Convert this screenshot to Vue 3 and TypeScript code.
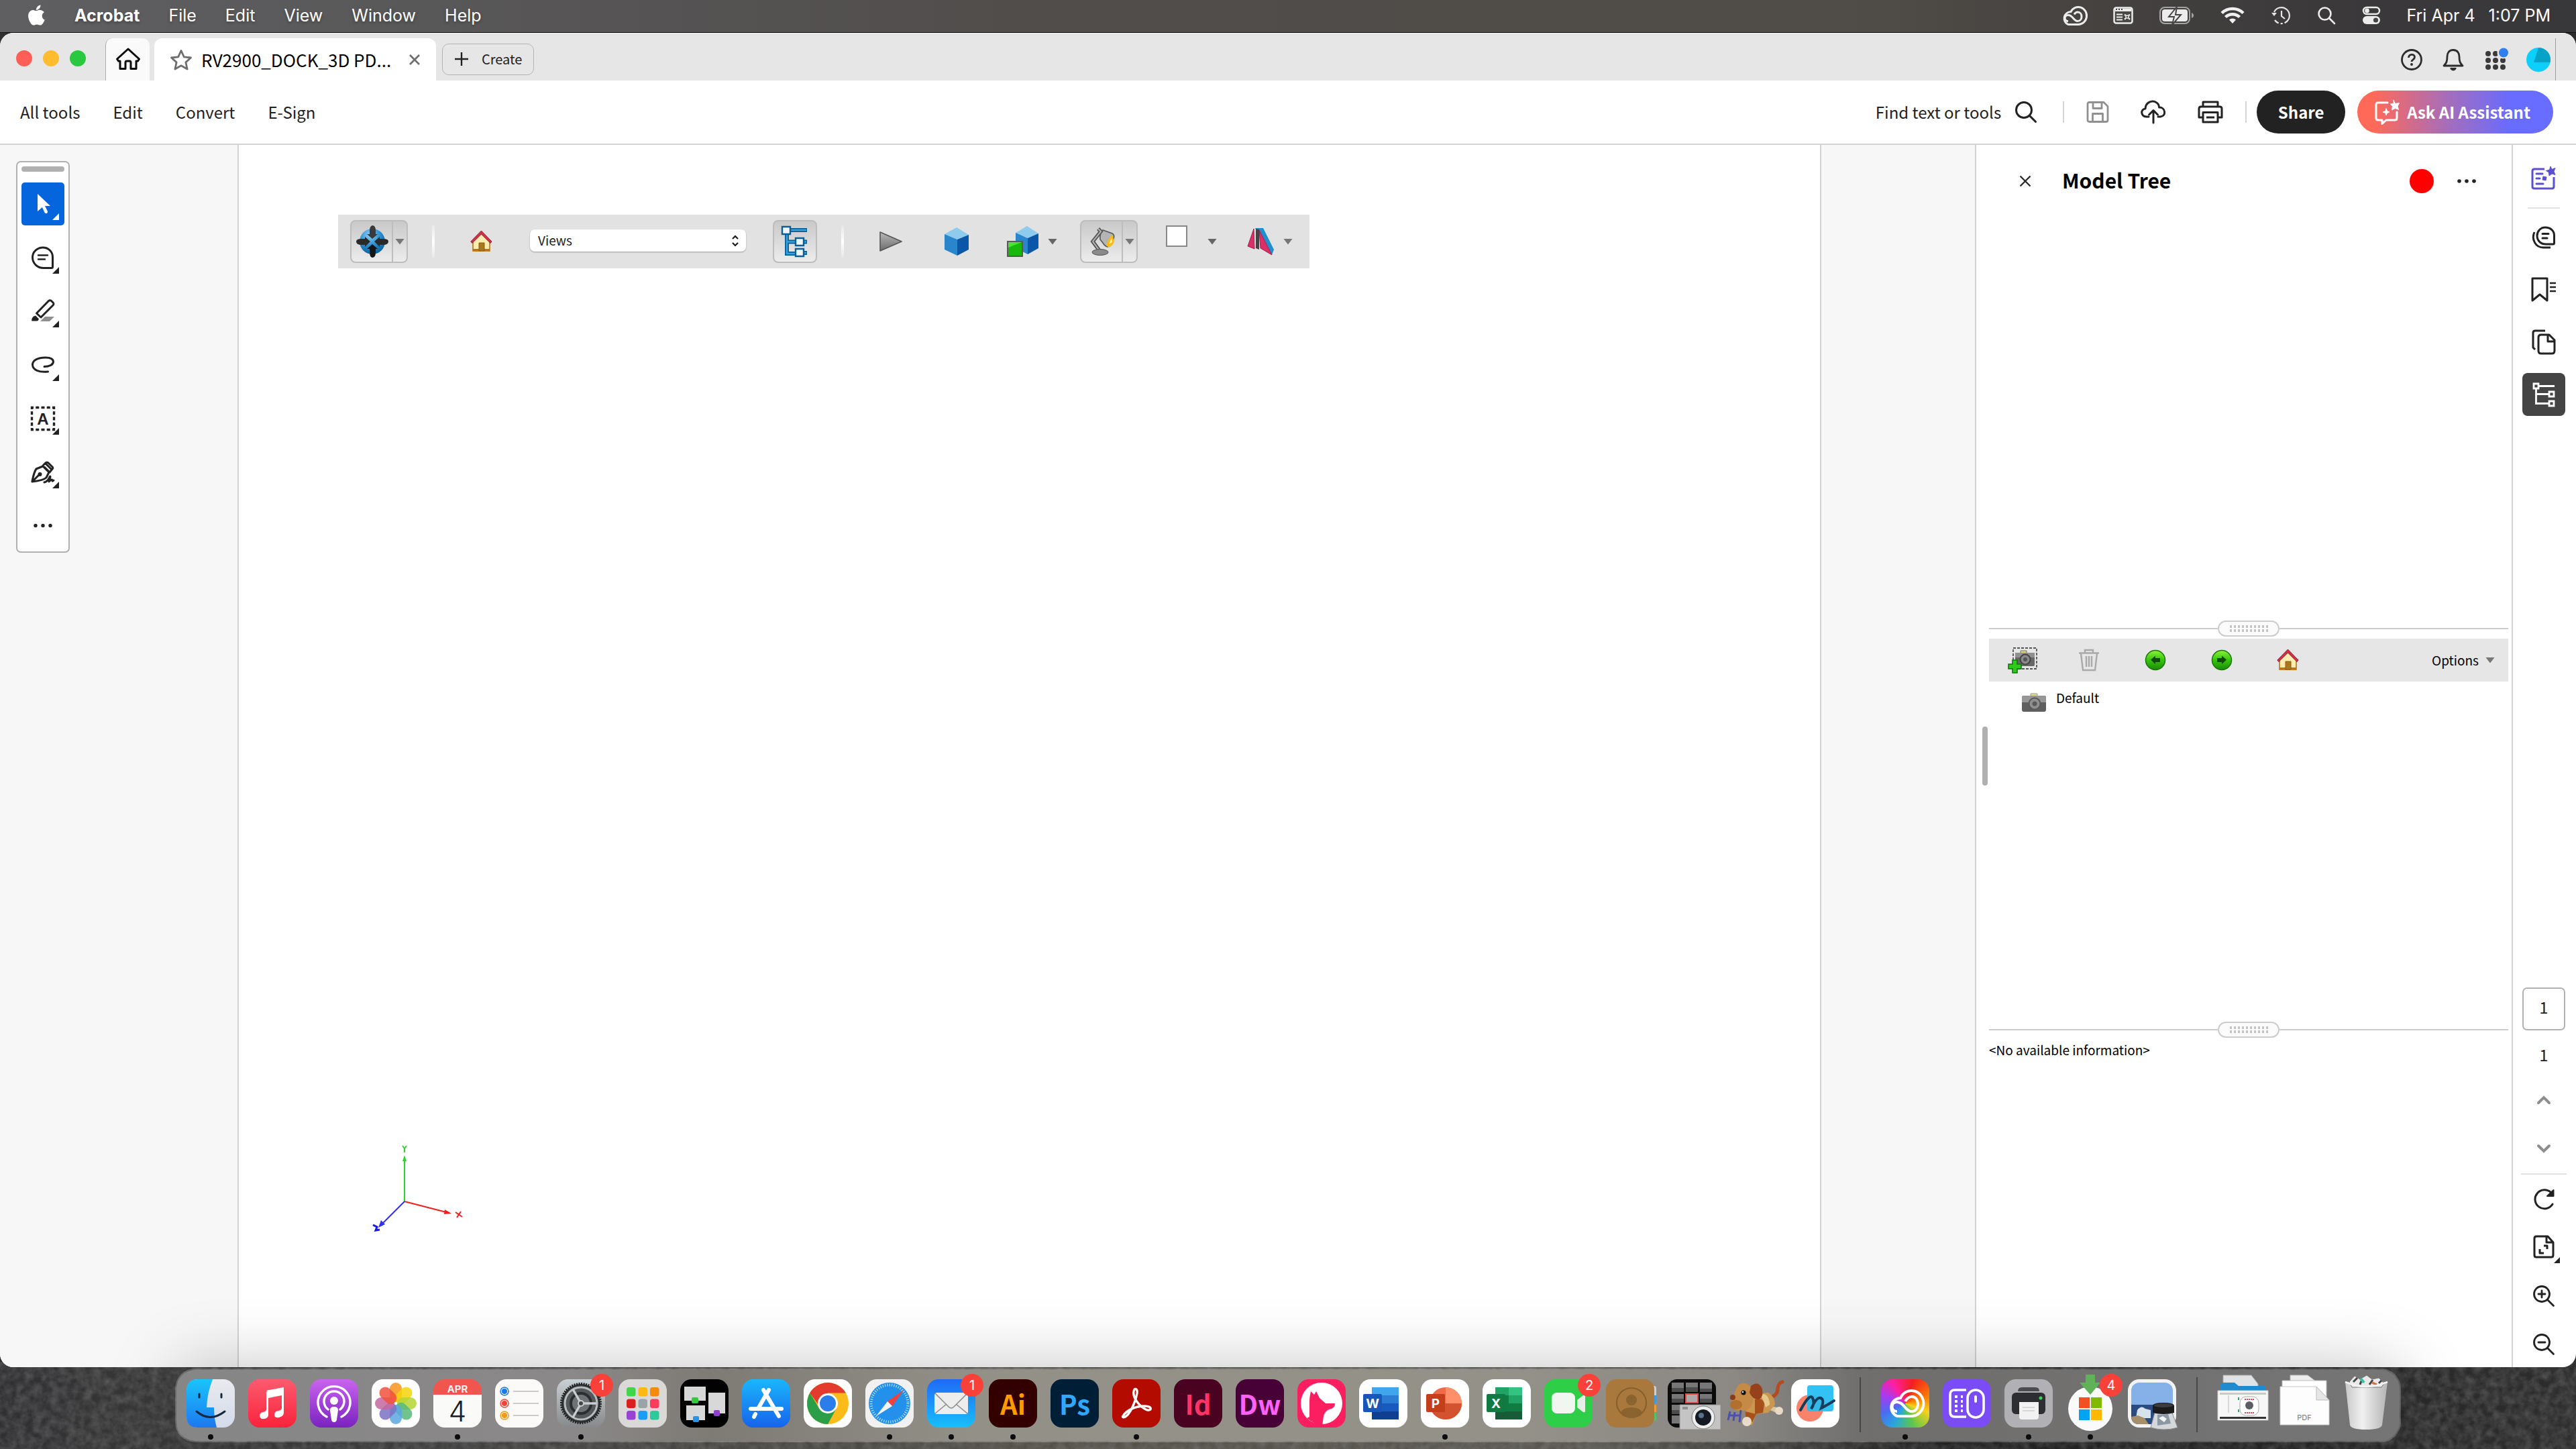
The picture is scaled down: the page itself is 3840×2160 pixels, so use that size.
<script setup lang="ts">
import { ref } from 'vue'

const menus = ['File', 'Edit', 'View', 'Window', 'Help']
const tools = ['All tools', 'Edit', 'Convert', 'E-Sign']
const page = ref('1')
const view = ref('Views')
const petals = [
  { a: 0, c: '#f7941d' },
  { a: 45, c: '#f5d50a' },
  { a: 90, c: '#b5d334' },
  { a: 135, c: '#57b97a' },
  { a: 180, c: '#5aa7e0' },
  { a: 225, c: '#7b72c4' },
  { a: 270, c: '#c667a0' },
  { a: 315, c: '#f2513c' },
]
const pads = ['#3fd649', '#fdb813', '#f58a0b', '#d9201c', '#9aa3a8', '#fb3b5c', '#9a42d6', '#1a9df4', '#2cc99b']
const gripCols = [0, 1, 2, 3, 4, 5, 6, 7, 8, 9]
</script>

<template>
  <div class="desktop">
    <svg class="stone" aria-hidden="true">
      <filter id="grain" x="0" y="0" width="100%" height="100%">
        <feTurbulence type="fractalNoise" baseFrequency="0.08" numOctaves="4" seed="4" />
        <feColorMatrix values="0 0 0 0 0.5  0 0 0 0 0.5  0 0 0 0 0.5  0.9 0.5 0 0 -0.45" />
      </filter>
      <rect width="100%" height="100%" filter="url(#grain)" />
    </svg>

    <header class="menubar">
      <nav class="menus" aria-label="Application menu">
        <svg class="apple" width="28" height="32" viewBox="0 0 28 32" fill="#fff"><path d="M20.400 0.500c.2 2-.6 3.900-1.800 5.300-1.200 1.300-3 2.300-4.700 2.200-.2-1.900.7-3.900 1.800-5.100C17 1.500 18.900.600 20.400.500zM26 11.200c-2.100 1.300-3.300 3.100-3.300 5.500 0 2.700 1.500 4.900 4 5.900-.5 1.600-1.300 3-2.200 4.300-1.300 1.900-2.600 3.700-4.600 3.700-2 0-2.600-1.200-4.900-1.200-2.300 0-3 1.200-4.900 1.200-2 .1-3.500-2-4.800-3.900C2.600 22.800.7 16 3.300 11.600c1.300-2.200 3.500-3.600 5.900-3.700 2 0 3.800 1.300 4.900 1.300s3.300-1.600 5.700-1.300c2.500.1 4.700 1.200 6.200 3.300z" /></svg>
        <button class="menu strong" type="button">Acrobat</button>
        <button v-for="m in menus" :key="m" class="menu" type="button">{{ m }}</button>
      </nav>
      <div class="status">
        <svg width="40" height="32" viewBox="0 0 40 32" fill="none" stroke="#ececec" stroke-width="3"><path d="M12 29.500h15a12.500 13 0 1 0-11-19A10.500 10 0 0 0 12 29.500z" /><path d="M12 24.500c-6 0-7-9 0-9 7 0 8 9 14 9 8 0 8-13.500 0-13.500-3 0-4 2-5 3.500" /></svg>
        <svg width="30" height="26" viewBox="0 0 30 26"><rect x="1.500" y="1.500" width="27" height="23" rx="3" fill="#4a4746" stroke="#ececec" stroke-width="2.500" /><path d="M3 3h24v4H3z" fill="#ececec" /><path d="M4 4h2M8 4h2M12 4h2" stroke="#444" stroke-width="2" /><path d="M5 11.500h9M5 15.500h9M5 19.500h9" stroke="#ececec" stroke-width="2.200" /><path d="M19 13h4v4h-4zM17.500 13.500V12H19M23 12h1.500v1.500M24.500 17v1.500H23M19 18.500h-1.500V17" stroke="#ececec" stroke-width="1.600" fill="none" /></svg>
        <svg width="52" height="28" viewBox="0 0 52 28"><rect x="1" y="2" width="44" height="24" rx="7" fill="none" stroke="#a5a3a3" stroke-width="2" /><rect x="4" y="5" width="38" height="18" rx="4" fill="#ececec" /><path d="M26 1 14 16h8l-3 12 13-15h-8z" fill="#ececec" stroke="#474445" stroke-width="2" /><path d="M48 10v8c2-1 3-2 3-4s-1-3-3-4z" fill="#a5a3a3" /></svg>
        <svg width="36" height="28" viewBox="0 0 36 28" fill="none" stroke="#f0f0f0" stroke-width="4.500"><path d="M2 10.500a23 23 0 0 1 32 0M7.500 16.500a15 15 0 0 1 21 0" /><path d="m18 26-5-5.500a7.500 7.500 0 0 1 10 0z" fill="#f0f0f0" stroke="none" /></svg>
        <svg width="30" height="28" viewBox="0 0 30 28" fill="none" stroke="#e6e6e6" stroke-width="2.200"><path d="M5 9A12 12 0 1 1 6 21" stroke-dasharray="46 3 3 3" /><path d="M16 7v8l5 4" /><path d="m1 10 4 5 4-5z" fill="#e6e6e6" stroke="none" /></svg>
        <svg width="28" height="28" viewBox="0 0 28 28" fill="none" stroke="#ececec" stroke-width="2.600"><circle cx="11.500" cy="11.500" r="9" /><path d="m18 18 8 8" stroke-linecap="round" /></svg>
        <svg width="28" height="28" viewBox="0 0 28 28"><rect x="2" y="2" width="24" height="10" rx="5" fill="none" stroke="#ececec" stroke-width="2.400" /><circle cx="7.500" cy="7" r="3.400" fill="#ececec" /><rect x="1" y="15" width="26" height="12" rx="6" fill="#ececec" /><circle cx="20.500" cy="21" r="3.600" fill="#444" /></svg>
        <time class="clock"><span>Fri Apr 4</span><span>1:07 PM</span></time>
      </div>
    </header>

    <main class="window">
      <div class="titlebar">
        <div class="lights"><i class="red"></i><i class="amber"></i><i class="green"></i></div>
        <button class="home-tab" type="button" aria-label="Home">
          <svg width="38" height="34" viewBox="0 0 38 34" fill="none" stroke="#0a0a0a" stroke-width="3" stroke-linejoin="round"><path d="M19 2 2.500 17l2 3H7v11.500h8V22q0-2 2-2h4q2 0 2 2v9.500h8V20h2.500l2-3z" /></svg>
        </button>
        <div class="doc-tab">
          <svg width="34" height="32" viewBox="0 0 34 32" fill="none" stroke="#6e6e6e" stroke-width="2.800" stroke-linejoin="round"><path d="m17 2.500 4.300 9.400 10.200 1.100-7.600 6.900 2.200 10.100L17 24.800 7.900 30l2.200-10.100L2.500 13l10.200-1.100z" /></svg>
          <span class="doc-name">RV2900_DOCK_3D PD...</span>
          <button class="bare" type="button" aria-label="Close tab"><svg width="18" height="18" viewBox="0 0 18 18" stroke="#6e6e6e" stroke-width="2.800"><path d="m2 2 14 14M16 2 2 16" /></svg></button>
        </div>
        <button class="create" type="button"><svg width="20" height="20" viewBox="0 0 20 20" stroke="#222" stroke-width="2.400"><path d="M10 0v20M0 10h20" /></svg>Create</button>
        <div class="account">
          <svg width="34" height="34" viewBox="0 0 34 34" fill="none" stroke="#2c2c2c" stroke-width="2.800"><circle cx="17" cy="17" r="14.500" /><path d="M12.500 14c0-6 9-6 9-1 0 4-4.500 3.500-4.500 7" /><circle cx="17" cy="24" r="1.200" fill="#2c2c2c" stroke-width="1.500" /></svg>
          <svg width="34" height="34" viewBox="0 0 34 34" fill="none" stroke="#2c2c2c" stroke-width="2.800" stroke-linejoin="round"><path d="M17 2.500c-6.500 0-9 5-9 10 0 8-1.500 9.500-5 13.500h28c-3.500-4-5-5.500-5-13.500 0-5-2.500-10-9-10z" /><path d="M13.500 29c1 4 6 4 7 0" fill="#2c2c2c" /></svg>
          <svg width="36" height="34" viewBox="0 0 36 34" fill="#3a3a3a"><circle cx="7" cy="8" r="4" /><circle cx="18" cy="8" r="4" /><circle cx="7" cy="18" r="4" /><circle cx="18" cy="18" r="4" /><circle cx="29" cy="18" r="4" /><circle cx="7" cy="28" r="4" /><circle cx="18" cy="28" r="4" /><circle cx="29" cy="28" r="4" /><circle cx="29" cy="7" r="8.500" fill="#e6e6e6" /><circle cx="30" cy="6.500" r="7" fill="#2f80ed" /></svg>
          <svg width="36" height="36" viewBox="0 0 36 36"><circle cx="18" cy="18" r="18" fill="#0cd0fb" /><path d="M18 0a18 18 0 0 1 17.500 22H11z" fill="#06a2c8" /></svg>
        </div>
      </div>

      <div class="toolbar">
        <nav class="tool-tabs" aria-label="Tools"><button v-for="t in tools" :key="t" class="bare" type="button">{{ t }}</button></nav>
        <div class="actions">
          <button class="bare find" type="button">Find text or tools
            <svg width="34" height="34" viewBox="0 0 34 34" fill="none" stroke="#222" stroke-width="3" stroke-linecap="round"><circle cx="14" cy="14" r="11.500" /><path d="m22.500 22.500 9 9" /></svg>
          </button>
          <i class="rule"></i>
          <div class="trio">
            <button class="bare" type="button" aria-label="Save"><svg width="34" height="32" viewBox="0 0 34 32" fill="none" stroke="#909090" stroke-width="2.800" stroke-linejoin="round"><path d="M2 4q0-2.500 2.500-2.500H26l6 6V28q0 2.500-2.500 2.500h-25Q2 30.500 2 28z" /><path d="M10 2v8.500h13V2M9.500 30V18.500h15V30" /></svg></button>
            <button class="bare" type="button" aria-label="Save to cloud"><svg width="38" height="36" viewBox="0 0 38 36" fill="none" stroke="#222" stroke-width="3" stroke-linecap="round" stroke-linejoin="round"><path d="M12 25H8.500C0 24.500-.5 14 7 13 7 4 17-.5 23 3.500c3.500 2 4.500 5 4.500 7.500 10 0 11 13 2 14H26" /><path d="M19 34V16M12.500 22l6.500-6.500 6.500 6.500" /></svg></button>
            <button class="bare" type="button" aria-label="Print"><svg width="38" height="34" viewBox="0 0 38 34" fill="none" stroke="#222" stroke-width="3" stroke-linejoin="round"><path d="M8 8.500V2h22v6.500M8 25H2V12q0-3 3-3h28q3 0 3 3v13h-6" /><path d="M8 17.500h22V32H8zM13 25h12" /></svg></button>
          </div>
          <i class="rule"></i>
          <button class="share" type="button">Share</button>
          <button class="ask" type="button">
            <svg width="38" height="38" viewBox="0 0 38 38" fill="none" stroke="#fff" stroke-width="3" stroke-linejoin="round" stroke-linecap="round"><path d="M19 5H5Q2 5 2 8v20q0 3 3 3h6v5.500L17 31h13q3 0 3-3V19" /><path d="m28 1.500 2.500 5 6-1-2.500 5 1.500 5-5-2-5 2.500 1-5.500L23 7l5-.5z" fill="#fff" stroke-width="1" /><path d="m17 14 1.500 3.500L22 19l-3.500 1.500L17 24l-1-3.500-4-1.500 4-1.500z" fill="#fff" stroke-width="1" /></svg>
            Ask AI Assistant
          </button>
        </div>
      </div>

      <div class="body">
        <aside class="gutter-left">
          <div class="palette">
            <i class="handle"></i>
            <button class="tool on" type="button" aria-label="Select"><svg width="64" height="64" viewBox="0 0 64 64"><path d="M24 17v26l7-6 3.500 8q1 1.500 3 1t1.500-3L35 35h8z" fill="#fff" /><path d="M56 46v10H46z" fill="#fff" /></svg></button>
            <button class="tool" type="button" aria-label="Comment"><svg width="64" height="64" viewBox="0 0 64 64" fill="none" stroke="#222" stroke-width="3"><path d="M32 17c-9 0-15.500 7-15.500 14.500C16.500 41 24 47.500 33 47.500h12q1.500 0 1.500-1.500V31C46.500 23 40 17 32 17z" /><path d="M25 28.500h14M25 34.500h10" stroke-width="2.400" stroke-linecap="round" /><path d="M56 46v10H46z" fill="#222" stroke="none" /></svg></button>
            <button class="tool" type="button" aria-label="Highlight"><svg width="64" height="64" viewBox="0 0 64 64" fill="none" stroke="#222" stroke-width="3" stroke-linejoin="round"><path d="m40.500 16.500q2-1.500 4 0l3 3q1 1.500 0 3L29 41l-6.500-6z" /><path d="M15 46q0-6 6-7.500l5 5q-1 3-3 3h-7z" fill="#222" stroke="none" /><path d="M35 40h14l-7 7H28z" fill="#909090" stroke="none" /><path d="M56 46v10H46z" fill="#222" stroke="none" /></svg></button>
            <button class="tool" type="button" aria-label="Draw"><svg width="64" height="64" viewBox="0 0 64 64" fill="none" stroke="#222" stroke-width="3" stroke-linecap="round"><path d="M34 34.500c8 0 13-3 13.500-7 0-5-6-6.500-12-6.500-11 0-19 4-19 10.500 0 8 10 12 23 10.500" /><path d="M56 46v10H46z" fill="#222" stroke="none" /></svg></button>
            <button class="tool" type="button" aria-label="Select text"><svg width="64" height="64" viewBox="0 0 64 64"><rect x="15.500" y="15.500" width="33" height="33" fill="none" stroke="#222" stroke-width="3.400" stroke-dasharray="5 3.250" stroke-dashoffset="2.500" /><text x="32" y="40.500" text-anchor="middle" class="glyph-a">A</text><path d="M56 46v10H46z" fill="#222" /></svg></button>
            <button class="tool" type="button" aria-label="Sign"><svg width="64" height="64" viewBox="0 0 64 64" fill="none" stroke="#222" stroke-width="3" stroke-linejoin="round" stroke-linecap="round"><path d="M16 45q3-14 6-18l10-4 9 9-4 8q-4 4-21 6zM17 45l10-10M32 22l4-4q2-1.500 4 0l6 6q1.500 2 0 3l-4 5zM37 20l7 7" /><circle cx="27.500" cy="35" r="2" fill="#222" stroke-width="2" /><path d="M34 47q5-1 8-8 1-2 1 0l-2 7q3-3 4-3t1 1.500 2-.5" /><path d="M56 46v10H46z" fill="#222" stroke="none" /></svg></button>
            <button class="tool" type="button" aria-label="More tools"><svg width="64" height="64" viewBox="0 0 64 64" fill="#222"><circle cx="21" cy="31.500" r="2.700" /><circle cx="32" cy="31.500" r="2.700" /><circle cx="43" cy="31.500" r="2.700" /></svg></button>
          </div>
        </aside>

        <section class="page">
          <div class="bar3d">
            <div class="cell">
              <div class="split">
                <button class="face" type="button" aria-label="Rotate"><svg width="54" height="54" viewBox="0 0 54 54"><defs><radialGradient id="ball" cx=".4" cy=".25" r=".8"><stop offset="0" stop-color="#8fd0f4" /><stop offset=".5" stop-color="#2b8fd0" /><stop offset="1" stop-color="#0a5a96" /></radialGradient></defs><circle cx="28" cy="27" r="19" fill="url(#ball)" /><path d="M24 16v-5q0-7 4-8 5 0 5 8v5h3l-8 7-8-7z" fill="#3a3a3a" /><path d="M24 38v5q0 7 4 8 5 0 5-8v-5h3l-8-7-8 7z" fill="#151515" /><path d="M17 23h-5q-8 0-8 4 0 5 8 5h5v3l8-8-8-7z" fill="#2a2a2a" /><path d="M39 23h5q8 0 8 4 0 5-8 5h-5v3l-8-8 8-7z" fill="#2a2a2a" /></svg></button>
                <button class="drop" type="button" aria-label="Rotate options"><i class="tri"></i></button>
              </div>
            </div>
            <div class="cell"><i class="sep"></i></div>
            <div class="cell"><button class="bare" type="button" aria-label="Default view"><svg width="34" height="34" viewBox="0 0 34 34"><path d="M4 16v15h25V16L16.500 5z" fill="#ffedb0" stroke="#b5761c" stroke-width="1.600" /><path d="M4 28h25v3.500H4z" fill="#c07515" /><path d="M13 31V19h8v12z" fill="#a8791a" stroke="#8a5c10" /><path d="M16.500 1 .8 17l2 2.500L16.500 6 30 19.500l2-2.500z" fill="#d2304a" stroke="#8e1a2c" /></svg></button></div>
            <div class="cell"><label class="views"><select v-model="view" aria-label="Views"><option>Views</option></select><svg width="12" height="18" viewBox="0 0 12 18" fill="none" stroke="#1a1a1a" stroke-width="2.200"><path d="m2 6 4-4 4 4M2 12l4 4 4-4" /></svg></label></div>
            <div class="cell">
              <button class="face solo" type="button" aria-label="Toggle model tree"><svg width="44" height="48" viewBox="0 0 44 48"><path d="M14 7h26M10 14v28h14M10 24.500h30M24 41h16" fill="none" stroke="#0a5f94" stroke-width="6" /><path d="M14 7h25M10 14v28h14M10 24.500h29M24 41h15" fill="none" stroke="#3aa0d8" stroke-width="2.500" /><path d="M3 2h12v11H3zM23 19h12v11H23zM23 35h12v11H23z" fill="#eef6fc" stroke="#0a5f94" stroke-width="2.400" /></svg></button>
            </div>
            <div class="cell"><i class="sep"></i></div>
            <div class="cell"><button class="bare" type="button" aria-label="Play animation"><svg width="36" height="32" viewBox="0 0 36 32"><defs><linearGradient id="ply" x2="0" y2="1"><stop offset="0" stop-color="#b9b9b9" /><stop offset="1" stop-color="#6c6c6c" /></linearGradient></defs><path d="M2 2v28l32-14z" fill="url(#ply)" stroke="#555" stroke-width="1.600" stroke-linejoin="round" /></svg></button></div>
            <div class="cell"><button class="bare" type="button" aria-label="Perspective"><svg width="40" height="44" viewBox="0 0 40 44"><path d="M20 1 38 12 21 19 2 11z" fill="#8fcbec" /><path d="m2 11 19 8v24L2 34z" fill="#2a86cc" /><path d="M38 12v22L21 43V19z" fill="#0a56a8" /></svg></button></div>
            <div class="cell"><button class="bare pair" type="button" aria-label="Render mode"><svg width="50" height="48" viewBox="0 0 50 48"><path d="m31 1 17 11-16 7-18-8z" fill="#8fcbec" /><path d="m14 11 18 8v24l-18-9z" fill="#2a86cc" /><path d="M48 12v22L32 43V19z" fill="#0a56a8" /><path d="M2 24h22v22H2z" fill="#18b80c" stroke="#5a5a5a" stroke-width="2" /><path d="M3 25h20l-20 8z" fill="#4fe03a" /></svg><i class="tri dark"></i></button></div>
            <div class="cell">
              <div class="split">
                <button class="face" type="button" aria-label="Lighting"><svg width="44" height="46" viewBox="0 0 44 46"><path d="m24 6 14 5q4 2 2 8l-3 4-6 8q-4-1-7-6l-4-5q-1-9 4-14z" fill="#b4b4b4" stroke="#555" stroke-width="1.600" /><path d="m38 13 3 9q-1 6-8 10l-4-3q2-9 9-16z" fill="#f6b916" /><path d="m37 18 1 6-5 3z" fill="#fff3a0" /><path d="M17 4 21 8 9 23l11 15" fill="none" stroke="#555" stroke-width="5.500" /><path d="M17 4 21 8 9 23l11 15" fill="none" stroke="#b5b5b5" stroke-width="2" /><ellipse cx="20" cy="39" rx="12" ry="4.500" fill="#8a8a8a" stroke="#555" /></svg></button>
                <button class="drop" type="button" aria-label="Lighting options"><i class="tri"></i></button>
              </div>
            </div>
            <div class="cell"><button class="bare swatch" type="button" aria-label="Background colour"><i class="chip"></i><i class="tri dark"></i></button></div>
            <div class="cell"><button class="bare pair" type="button" aria-label="Cross section"><svg width="42" height="44" viewBox="0 0 42 44"><path d="M12 2 24 2 40 34 37 42z" fill="#1f90cf" /><path d="M10 3 1 29l10 4z" fill="#d8316a" stroke="#a51f4d" /><path d="M13 3v29l5 2V4z" fill="#444" /><path d="m18 5 2 27 17 10z" fill="#dc2f68" stroke="#a51f4d" /></svg><i class="tri"></i></button></div>
          </div>
          <svg class="axes" width="140" height="136" viewBox="0 0 140 136" fill="none" stroke-width="2">
            <path d="M51 87V22" stroke="#2fd42f" /><path d="m51 18-3 9h6z" fill="#2fd42f" /><path d="m48 4 3 4 3-4M51 8v6" stroke="#2fd42f" />
            <path d="m51 87 66 17" stroke="#f02020" /><path d="m121 105-10-6-1 7z" fill="#f02020" /><path d="m127 103 10 7M129 111l6-9" stroke="#f02020" />
            <path d="m51 87-34 34" stroke="#3030f0" /><path d="m12 126 4-11 6 6z" fill="#3030f0" /><path d="m4 122 6 3-2 5 6-1" stroke="#1a1ae0" stroke-width="3" />
          </svg>
        </section>
        <div class="gutter-right"></div>

        <aside class="panel">
          <i class="resizer"></i>
          <section class="pane">
            <header class="panel-head">
              <button class="bare" type="button" aria-label="Close panel"><svg width="18" height="18" viewBox="0 0 18 18" stroke="#2c2c2c" stroke-width="2.400"><path d="m1.500 1.500 15 15M16.500 1.500l-15 15" /></svg></button>
              <h2>Model Tree</h2>
              <i class="rec"></i>
              <button class="bare" type="button" aria-label="Panel options"><svg width="30" height="8" viewBox="0 0 30 8" fill="#222"><circle cx="4" cy="4" r="2.800" /><circle cx="15" cy="4" r="2.800" /><circle cx="26" cy="4" r="2.800" /></svg></button>
            </header>
          </section>
          <section class="pane">
            <div class="splitter"><span class="grip"><i v-for="g in gripCols" :key="g"></i></span></div>
            <div class="view-bar">
              <button class="bare slot" type="button" aria-label="Create view"><svg width="46" height="40" viewBox="0 0 46 40"><rect x="9" y="2" width="35" height="31" fill="none" stroke="#555" stroke-width="1.800" stroke-dasharray="4 2" /><path d="M20 6h9v5h-9z" fill="#ddd46a" stroke="#777" /><rect x="12" y="9" width="29" height="20" rx="2" fill="#686868" /><path d="M12 9h29v7H12z" fill="#909090" /><circle cx="27" cy="19" r="7.500" fill="#8a8a8a" stroke="#444" stroke-width="2" /><circle cx="27" cy="19" r="3" fill="#555" /><path d="M8 20h7v6h6v7h-6v6H8v-6H2v-7h6z" fill="#2fc81c" stroke="#0d7a08" stroke-width="1.600" /></svg></button>
              <button class="bare slot" type="button" aria-label="Delete view"><svg width="32" height="34" viewBox="0 0 32 34" fill="none" stroke="#a9a9a9" stroke-width="2.400"><path d="M1 6.500h30M10 6V2h12v4M4 7l3 25h18l3-25M12 11v16M16 11v16M20 11v16" /></svg></button>
              <button class="bare slot" type="button" aria-label="Previous view"><svg width="32" height="32" viewBox="0 0 32 32"><defs><linearGradient id="leaf" x2="0" y2="1"><stop offset="0" stop-color="#8cf03c" /><stop offset=".5" stop-color="#35c60a" /><stop offset="1" stop-color="#1c8a06" /></linearGradient></defs><circle cx="16" cy="16" r="14.500" fill="url(#leaf)" stroke="#1a7406" stroke-width="1.500" /><path d="m9 15.500 7-6v3.500h7v6h-7v3z" fill="#0e4a06" /></svg></button>
              <button class="bare slot" type="button" aria-label="Next view"><svg width="32" height="32" viewBox="0 0 32 32"><circle cx="16" cy="16" r="14.500" fill="url(#leaf)" stroke="#1a7406" stroke-width="1.500" /><path d="m23 15.500-7-6v3.500H9v6h7v3z" fill="#0e4a06" /></svg></button>
              <button class="bare slot" type="button" aria-label="Default view"><svg width="34" height="34" viewBox="0 0 34 34"><path d="M4 16v15h25V16L16.500 5z" fill="#ffedb0" stroke="#b5761c" stroke-width="1.600" /><path d="M4 28h25v3.500H4z" fill="#c07515" /><path d="M13 31V19h8v12z" fill="#a8791a" stroke="#8a5c10" /><path d="M16.500 1 .8 17l2 2.500L16.500 6 30 19.500l2-2.500z" fill="#d2304a" stroke="#8e1a2c" /></svg></button>
              <button class="bare options" type="button">Options<i class="tri"></i></button>
            </div>
            <div class="view-row">
              <svg width="38" height="30" viewBox="0 0 38 30"><path d="M14 1h10v6H14z" fill="#e3dc7a" stroke="#999" /><rect x="1" y="4" width="36" height="24" rx="3" fill="#5f5f5f" /><path d="M1 7q0-3 3-3h30q3 0 3 3v7H1z" fill="#979797" /><circle cx="20" cy="16" r="8.500" fill="#8f8f8f" stroke="#5a5a5a" stroke-width="2" /><circle cx="20" cy="16" r="3.500" fill="#5a5a5a" /></svg>
              <span>Default</span>
            </div>
          </section>
          <section class="pane">
            <div class="splitter"><span class="grip"><i v-for="g in gripCols" :key="g"></i></span></div>
            <p class="info">&lt;No available information&gt;</p>
          </section>
        </aside>

        <nav class="rail" aria-label="Panels">
          <div class="rail-top">
            <button class="bare rb" type="button" aria-label="AI Assistant"><svg width="38" height="36" viewBox="0 0 38 36" fill="none" stroke="#5c50d0" stroke-width="3" stroke-linejoin="round"><path d="M20 4H5Q2 4 2 7v23q0 3 3 3h26q3 0 3-3V16" /><path d="M8 11h9M8 18h5M8 26h10" stroke-linecap="round" /><path d="m29 0 2 4.500 5-2-2 5 2 5-5-1.500-4 3-.5-5-4-2.500 5-1.500zM18 15l5 1-1 5-5-1z" fill="#5c50d0" stroke-width="1" /></svg></button>
            <i class="rail-rule"></i>
            <button class="bare rb" type="button" aria-label="Comments"><svg width="36" height="34" viewBox="0 0 36 34" fill="none" stroke="#222" stroke-width="3" stroke-linejoin="round"><path d="M20 2C13 2 8 8 8 14.500 8 22 14 27 21 27h11q1.500 0 1.500-1.500V14C33.500 7 28 2 20 2z" /><path d="M16 11.500h9M16 18h7" stroke-linecap="round" /><path d="M4 9C-1 20 6 32 17 32h11" /></svg></button>
            <button class="bare rb" type="button" aria-label="Bookmarks"><svg width="38" height="38" viewBox="0 0 38 38" fill="none" stroke="#222" stroke-width="3" stroke-linejoin="round"><path d="M2 2h22v33l-11-9-11 9z" /><path d="M28 9h9M28 15h9M28 21h9" stroke-width="2.600" /></svg></button>
            <button class="bare rb" type="button" aria-label="Pages"><svg width="36" height="38" viewBox="0 0 36 38" fill="none" stroke="#222" stroke-width="3" stroke-linejoin="round"><path d="M20 2H5Q2 2 2 5v22l3 3" /><path d="M10 12q0-4 4-4h12l8 8v16q0 4-4 4H14q-4 0-4-4zM24 8v10h10" /></svg></button>
            <button class="bare rb on" type="button" aria-label="Model Tree"><svg width="36" height="38" viewBox="0 0 36 38" fill="none" stroke="#fff" stroke-width="2.800"><path d="M3 3h7v7H3zM26 15h7v7h-7zM26 29h7v7h-7zM11 6.500h23M6.500 11v21.500H25M7 18.500h18" /></svg></button>
          </div>
          <div class="rail-bottom">
            <input v-model="page" class="pagebox" aria-label="Page number" />
            <span class="total">1</span>
            <button class="bare rb" type="button" aria-label="Previous page"><svg width="24" height="14" viewBox="0 0 24 14" fill="none" stroke="#8e8e8e" stroke-width="4" stroke-linecap="round"><path d="m4 11 8-8 8 8" /></svg></button>
            <button class="bare rb" type="button" aria-label="Next page"><svg width="24" height="14" viewBox="0 0 24 14" fill="none" stroke="#8e8e8e" stroke-width="4" stroke-linecap="round"><path d="m4 3 8 8 8-8" /></svg></button>
            <i class="rail-rule wide"></i>
            <button class="bare rb" type="button" aria-label="Rotate page"><svg width="34" height="34" viewBox="0 0 34 34" fill="none" stroke="#222" stroke-width="3" stroke-linejoin="round"><path d="M30 24a14 14 0 1 1-2-17" stroke-linecap="round" /><path d="M31.500 3v9H22z" fill="#222" stroke-width="2" /></svg></button>
            <button class="bare rb" type="button" aria-label="Fit page"><svg width="64" height="64" viewBox="0 0 64 64" fill="none" stroke="#222" stroke-width="3" stroke-linejoin="round"><path d="M18 18q0-3 3-3h17l8 9v19q0 3-3 3H21q-3 0-3-3zM36 15v9h10" /><path d="M32 29h5v5M26 34v6h6" /><path d="M56 46v9h-9z" fill="#222" stroke="none" /></svg></button>
            <button class="bare rb" type="button" aria-label="Zoom in"><svg width="34" height="34" viewBox="0 0 34 34" fill="none" stroke="#222" stroke-width="2.800" stroke-linecap="round"><circle cx="14" cy="14" r="11.500" /><path d="m22.500 22.500 9 9M14 9v10M9 14h10" /></svg></button>
            <button class="bare rb" type="button" aria-label="Zoom out"><svg width="34" height="34" viewBox="0 0 34 34" fill="none" stroke="#222" stroke-width="2.800" stroke-linecap="round"><circle cx="14" cy="14" r="11.500" /><path d="m22.500 22.500 9 9M9 14h10" /></svg></button>
          </div>
        </nav>
      </div>
    </main>

    <footer class="dock-area">
      <div class="dock">
        <button class="app run" type="button" aria-label="Finder"><svg viewBox="0 0 72 72"><defs><linearGradient id="fb" x2="0" y2="1"><stop offset="0" stop-color="#19c4fb" /><stop offset="1" stop-color="#1e78f0" /></linearGradient><linearGradient id="fw" x2="0" y2="1"><stop offset="0" stop-color="#e9eaee" /><stop offset="1" stop-color="#d3dbea" /></linearGradient></defs><rect width="72" height="72" rx="17" fill="url(#fw)" /><path d="M17 0h22q-8 20-9 42h11q0 16 4 30H17Q0 72 0 55V17Q0 0 17 0z" fill="url(#fb)" /><path d="M19 22v5M52 22v5M15 48q20 17 42 0" fill="none" stroke="#14293f" stroke-width="3" stroke-linecap="round" /></svg></button>
        <button class="app" type="button" aria-label="Music"><svg viewBox="0 0 72 72"><defs><linearGradient id="mu" x2="0" y2="1"><stop offset="0" stop-color="#fb5b6f" /><stop offset="1" stop-color="#fa233b" /></linearGradient></defs><rect width="72" height="72" rx="17" fill="url(#mu)" /><path d="M26 17 53 12v38q0 5-7 7-7 1-7-4 0-5 6-6 5-1 5-4V24l-20 4v25q0 5-6 6t-7-4q0-5 5-6t5-4V20q0-2 2-3z" fill="#fff" /></svg></button>
        <button class="app" type="button" aria-label="Podcasts"><svg viewBox="0 0 72 72"><defs><linearGradient id="po" x2="0" y2="1"><stop offset="0" stop-color="#c964ef" /><stop offset="1" stop-color="#7a22c0" /></linearGradient></defs><rect width="72" height="72" rx="17" fill="url(#po)" /><g fill="none" stroke="#fff" stroke-width="3.400" stroke-linecap="round"><path d="M25 56a24 24 0 1 1 22 0M27 45a15 15 0 1 1 18 0" /></g><circle cx="36" cy="32" r="6" fill="#fff" /><path d="M30 46q0-5 6-5t6 5l-2 14q-.5 4-4 4t-4-4z" fill="#fff" /></svg></button>
        <button class="app" type="button" aria-label="Photos"><svg viewBox="0 0 72 72"><rect width="72" height="72" rx="17" fill="#fff" /><rect v-for="p in petals" :key="p.a" x="27" y="5" width="18" height="29" rx="9" :fill="p.c" opacity=".85" :transform="`rotate(${p.a} 36 36)`" /></svg></button>
        <button class="app cal run" type="button" aria-label="Calendar"><span class="month">APR</span><span class="day">4</span></button>
        <button class="app" type="button" aria-label="Reminders"><svg viewBox="0 0 72 72"><rect width="72" height="72" rx="17" fill="#fbfaf9" /><path d="M27 18h38M27 36h38M27 54h38" stroke="#bdbdbd" stroke-width="1.500" /><g fill="none" stroke-width="1.500"><circle cx="14" cy="18" r="6" stroke="#1677f0" /><circle cx="14" cy="36" r="6" stroke="#f04236" /><circle cx="14" cy="54" r="6" stroke="#f59a12" /></g><circle cx="14" cy="18" r="4" fill="#1677f0" /><circle cx="14" cy="36" r="4" fill="#f04236" /><circle cx="14" cy="54" r="4" fill="#f59a12" /></svg></button>
        <button class="app run" type="button" aria-label="System Settings"><svg viewBox="0 0 72 72"><defs><linearGradient id="se" x2="0" y2="1"><stop offset="0" stop-color="#c9d0d4" /><stop offset="1" stop-color="#86888b" /></linearGradient></defs><rect width="72" height="72" rx="17" fill="url(#se)" /><circle cx="36" cy="36" r="29" fill="#35383a" stroke="#222" stroke-width="4" stroke-dasharray="2 1.500" /><circle cx="36" cy="36" r="24" fill="#55585a" stroke="#b8bcbe" stroke-width="3" /><circle cx="36" cy="36" r="15" fill="#6f7274" stroke="#2b2d2e" stroke-width="4" /><path d="M36 36h23M36 36 24 15M36 36 24 57" stroke="#c9cdcf" stroke-width="3.500" /><circle cx="36" cy="36" r="4" fill="#444" stroke="#c9cdcf" stroke-width="2" /></svg><b class="badge">1</b></button>
        <button class="app" type="button" aria-label="Launchpad"><svg viewBox="0 0 72 72"><rect width="72" height="72" rx="17" fill="#dad9d8" /><rect v-for="(c, i) in pads" :key="i" :x="12 + (i % 3) * 17.5" :y="12 + Math.floor(i / 3) * 17.5" width="13.500" height="13.500" rx="3.500" :fill="c" /></svg></button>
        <button class="app" type="button" aria-label="Mission Control"><svg viewBox="0 0 72 72"><rect width="72" height="72" rx="17" fill="#020202" /><path d="M6 11h32v21H6zM42 20h25v31H42zM9 39h28v22H9z" fill="#d9d8d9" /><rect x="17" y="27" width="10" height="9" rx="2" fill="#36c93e" /><rect x="50" y="46" width="9" height="9" rx="2" fill="#9040cf" /><rect x="19" y="55" width="9" height="9" rx="2" fill="#2694e8" /></svg></button>
        <button class="app" type="button" aria-label="App Store"><svg viewBox="0 0 72 72"><defs><linearGradient id="as" x2="0" y2="1"><stop offset="0" stop-color="#1ab6fc" /><stop offset="1" stop-color="#1763ec" /></linearGradient></defs><rect width="72" height="72" rx="17" fill="url(#as)" /><path d="M40 16 24 44M32 16l23 39M13 44h46M20 52l-2 4" stroke="#fff" stroke-width="6" stroke-linecap="round" /></svg></button>
        <button class="app" type="button" aria-label="Chrome"><svg viewBox="0 0 72 72"><rect width="72" height="72" rx="17" fill="#fff" /><circle cx="36" cy="36" r="31" fill="#fbbc1a" /><path d="M9.200 20.500A31 31 0 0 1 62.800 20.500H36L25 42z" fill="#e33b2e" /><path d="M9.200 20.500A31 31 0 0 0 36 67l13-24-26 0z" fill="#2b9e48" /><circle cx="36" cy="36" r="15" fill="#fff" /><circle cx="36" cy="36" r="12" fill="#2b7de9" /></svg></button>
        <button class="app run" type="button" aria-label="Safari"><svg viewBox="0 0 72 72"><rect width="72" height="72" rx="17" fill="#f1f1f1" /><circle cx="36" cy="36" r="31" fill="#2391ec" /><circle cx="36" cy="36" r="27.500" fill="none" stroke="#cfe9fb" stroke-width="4" stroke-dasharray="1 2.400" /><path d="m57 16-17 24-7-7z" fill="#f0413a" /><path d="m16 55 17-22 7 7z" fill="#f4f4f4" /></svg></button>
        <button class="app run" type="button" aria-label="Mail"><svg viewBox="0 0 72 72"><defs><linearGradient id="ma" x2="0" y2="1"><stop offset="0" stop-color="#1f6af6" /><stop offset="1" stop-color="#18bffb" /></linearGradient></defs><rect width="72" height="72" rx="17" fill="url(#ma)" /><rect x="11" y="20" width="50" height="32" rx="4" fill="#ededed" /><path d="m12 21 20 20q4 4 8 0l20-20M12 51l17-14M60 51 43 37" fill="none" stroke="#8d8d8d" stroke-width="1.600" /></svg><b class="badge">1</b></button>
        <button class="app adobe ai run" type="button">Ai</button>
        <button class="app adobe ps" type="button">Ps</button>
        <button class="app run" type="button" aria-label="Acrobat"><svg viewBox="0 0 72 72"><rect width="72" height="72" rx="17" fill="#b30b00" /><path d="M16 55c5-9 19-15 32-15 14 0 10 9 2 5C40 40 30 27 32 18c1-6 6-4 5 3-2 12-9 27-15 33-4 4-8 3-6 1z" fill="none" stroke="#fff" stroke-width="3.400" stroke-linejoin="round" /></svg></button>
        <button class="app adobe id" type="button">Id</button>
        <button class="app adobe dw" type="button">Dw</button>
        <button class="app" type="button" aria-label="Paw"><svg viewBox="0 0 72 72"><rect width="72" height="72" rx="17" fill="#fb1f62" /><ellipse cx="36" cy="36" rx="31" ry="31" fill="#fff" /><path d="M18 56V33q0-6 2-15l5 5 3-5 5 10 9 8h14q0 8-9 9-6 3-8 10l-2 15Q24 66 14 58z" fill="#fb1f62" /></svg></button>
        <button class="app" type="button" aria-label="Word"><svg viewBox="0 0 72 72"><rect width="72" height="72" rx="17" fill="#fff" /><path d="M19 12h40v12H19z" fill="#41a5ee" /><path d="M19 24h40v12H19z" fill="#2b7cd3" /><path d="M19 36h40v12H19z" fill="#185abd" /><path d="M19 48h40v12H19z" fill="#103f91" /><rect x="6" y="22" width="28" height="27" rx="2" fill="#1a56b8" /><text x="20" y="42.500" class="office">W</text></svg></button>
        <button class="app run" type="button" aria-label="PowerPoint"><svg viewBox="0 0 72 72"><rect width="72" height="72" rx="17" fill="#fff" /><circle cx="37" cy="36" r="24" fill="#ed6c47" /><path d="M37 12a24 24 0 0 1 24 24H37z" fill="#ff8f6b" /><path d="M61 36a24 24 0 0 1-48 0z" fill="#d35230" /><rect x="8" y="22" width="28" height="27" rx="2" fill="#c43e1c" /><text x="22" y="42.500" class="office">P</text></svg></button>
        <button class="app" type="button" aria-label="Excel"><svg viewBox="0 0 72 72"><rect width="72" height="72" rx="17" fill="#fff" /><path d="M19 12h20v12H19z" fill="#21a366" /><path d="M39 12h20v12H39z" fill="#33c481" /><path d="M19 24h20v24H19z" fill="#107c41" /><path d="M39 24h20v12H39z" fill="#21a366" /><path d="M39 36h20v12H39z" fill="#107c41" /><path d="M19 48h40v12H19z" fill="#185c37" /><rect x="6" y="22" width="28" height="27" rx="2" fill="#117a42" /><text x="20" y="42.500" class="office">X</text></svg></button>
        <button class="app" type="button" aria-label="FaceTime"><svg viewBox="0 0 72 72"><rect width="72" height="72" rx="17" fill="#2fce48" /><rect x="11" y="20" width="35" height="31" rx="8" fill="#f1f6f1" /><path d="m49 31 9-7q3-1 3 1v23q0 2-3 1l-9-7z" fill="#e6efe6" /></svg><b class="badge">2</b></button>
        <button class="app" type="button" aria-label="Contacts"><svg viewBox="0 0 72 72"><path d="M64 10h8q3 0 3 4v10H64z" fill="#cfcfcf" /><path d="M64 24h11v12H64z" fill="#3d9be0" /><path d="M64 38h11v11H64z" fill="#f09a2c" /><path d="M64 50h11v8q0 4-3 4h-8z" fill="#4fc465" /><rect width="72" height="72" rx="15" fill="#a8783c" /><circle cx="38" cy="35" r="22" fill="none" stroke="#85602f" stroke-width="2" /><circle cx="38" cy="31" r="8" fill="#8b632f" /><path d="M22 50q3-8 16-8t16 8q-16 14-32 0z" fill="#8b632f" /></svg></button>
        <button class="app" type="button" aria-label="Image Capture"><svg viewBox="0 0 72 72"><rect width="72" height="72" rx="14" fill="#0b0b0b" /><path d="M6 5h18v14H6zM27 5h18v14H27zM48 5h18v14H48zM6 22h18v13H6zM48 22h18v13H48zM6 38h12v14H6zM6 54h12v12H6z" fill="#777" /><path d="M6 13h18v6H6zM27 12h18v7H27zM48 14h18v5H48zM6 29h18v6H6zM48 29h18v6H48zM6 46h12v6H6z" fill="#4c4c4c" /><path d="M27 22h18v13H27z" fill="#aaa" stroke="#e04848" stroke-width="2" /><path d="M18 38h61v37H18z" fill="#c4c4c4" stroke="#8c8c8c" /><path d="M22 41h8v4h-8z" fill="#8f8f8f" /><circle cx="53" cy="57" r="17" fill="#eee" stroke="#777" /><circle cx="53" cy="57" r="12" fill="#151a22" /><circle cx="50" cy="54" r="4" fill="#56708e" /></svg></button>
        <button class="app" type="button" aria-label="Search companion"><svg viewBox="0 0 72 72"><path d="M60 28Q72 24 72 14 73 5 79 4" stroke="#b34a20" stroke-width="5" fill="none" stroke-linecap="round" /><path d="M60 40l12 2 4 10-6-2-14-6z" fill="#d9c7a0" /><path d="M26 34q12-14 32-14 10 6 10 18l-10 12-18 2-6 16H22z" fill="#c9974f" /><path d="M38 30q10-4 14 6l-2 14-12 2zM24 48l16 4-6 12-10-2z" fill="#a6501c" /><path d="M52 22q8 4 8 16l-6 4q-2-10-8-18z" fill="#e6c88c" /><path d="M8 20Q12 4 24 6q12 4 12 20 0 14-10 20-16 4-22-4-2-10 4-22z" fill="#c58a45" /><ellipse cx="10" cy="38" rx="9" ry="7" fill="#b2702e" /><path d="M32 10q10-8 16 2 4 14-4 18-10 0-14-10z" fill="#96401c" /><circle cx="21" cy="20" r="3.500" fill="#111" /><circle cx="20" cy="19" r="1.200" fill="#fff" /><circle cx="5" cy="27" r="4" fill="#8c3c1a" /><circle cx="26" cy="63" r="7" fill="#e8dcc8" /><circle cx="74" cy="47" r="6" fill="#e8dcc8" /><path d="m1 48-3 13M8 49 6 62M17 46l-2 18M-2 54h18" stroke="#4a50b0" stroke-width="3" /></svg></button>
        <button class="app" type="button" aria-label="Freeform"><svg viewBox="0 0 72 72"><rect width="72" height="72" rx="17" fill="#fff" /><circle cx="28" cy="43" r="20" fill="#f9836a" /><rect x="24" y="9" width="39" height="39" rx="4" fill="#23bdf3" opacity=".92" /><path d="M14 46q14-26 18-18t-2 16q8-18 14-16t1 15q6-3 19-11" fill="none" stroke="#143c5c" stroke-width="4" stroke-linecap="round" /></svg></button>
        <i class="bar"></i>
        <button class="app run" type="button" aria-label="Creative Cloud"><svg viewBox="0 0 72 72"><foreignObject width="72" height="72"><div class="rainbow"></div></foreignObject><g fill="none" stroke="#fff" stroke-width="4"><path d="M24 55h22a18 19 0 1 0-17-27A14 14 0 0 0 24 55z" /><path d="M24 48c-10 0-10-14 0-14s12 14 22 14c12 0 12-22 0-22-6 0-8 4-10 7" /></g></svg></button>
        <button class="app" type="button" aria-label="Device manager"><svg viewBox="0 0 72 72"><rect width="72" height="72" rx="17" fill="#7a4cf6" /><g fill="none" stroke="#fff" stroke-width="3.600"><path d="M35 16H18q-7 0-7 7v26q0 7 7 7h17" /><rect x="37" y="16" width="24" height="41" rx="12" /></g><path d="M49 26v7" stroke="#fff" stroke-width="4" stroke-linecap="round" /><path d="M18 26h4M27 26h3M18 33h4M27 33h3M18 40h4M27 40h3M18 47h4M27 47h3" stroke="#fff" stroke-width="4" /></svg></button>
        <button class="app run" type="button" aria-label="Printer"><svg viewBox="0 0 72 72"><rect width="72" height="72" rx="17" fill="#b1b0b4" /><path d="M20 18q0-6 6-6h20q6 0 6 6z" fill="#4a4c4f" /><rect x="11" y="20" width="50" height="32" rx="6" fill="#2c2e31" /><circle cx="54" cy="28" r="2.500" fill="#37d65a" /><path d="M22 34h29v22q0 4-4 4H26q-4 0-4-4z" fill="#f2f2f2" /><path d="M27 42h18M27 47h18" stroke="#cfcfcf" stroke-width="1.500" /></svg></button>
        <button class="app run" type="button" aria-label="Microsoft AutoUpdate"><svg viewBox="0 0 72 72"><circle cx="36" cy="44" r="33" fill="#fafafa" /><path d="M19 27h16v16H19z" fill="#f25022" /><path d="M37 27h16v16H37z" fill="#7fba00" /><path d="M19 45h16v16H19z" fill="#00a4ef" /><path d="M37 45h16v16H37z" fill="#ffb900" /><path d="M29-7h14V5h8L36 23 20 5h9z" fill="#5fb257" /></svg><b class="badge">4</b></button>
        <button class="app" type="button" aria-label="Preview"><svg viewBox="0 0 72 72"><rect width="72" height="72" rx="17" fill="#f3f3f3" /><rect x="5" y="5" width="62" height="62" rx="12" fill="#86b0e8" /><path d="M5 38h62v18q0 11-12 11H17Q5 67 5 55z" fill="#2b4c80" /><path d="M14 46q6-8 12-2l8 2v12H12z" fill="#d8e2ec" /><path d="m5 56 10-2 10 4 6 9H17Q5 67 5 55z" fill="#a6906c" /><path d="M40 50h26l8 22q-20 6-40 0z" fill="#d4d8da" stroke="#8b8f91" /><path d="m44 53 16-1 4 14-20 3z" fill="#8c98a4" /><path d="m46 58 6-3 6 4-4 5z" fill="#f4f6f8" /><path d="M37 40q0-5 16-5t16 5v10q-16 4-32 0z" fill="#1b1b1b" /><ellipse cx="53" cy="39" rx="14" ry="3" fill="#3c3c3c" /></svg></button>
        <i class="bar"></i>
        <button class="app" type="button" aria-label="Documents"><svg viewBox="0 0 72 72"><path d="M8-6h42l10 13v22H8z" fill="#dfe3e6" stroke="#aaa" /><path d="M4 10q0-5 5-5h16l6 5h37q3 0 3 4v26H4z" fill="#1e8bd0" /><path d="M0 17h75v44H0z" fill="#f7f7f7" stroke="#ccc" /><path d="M3 20h69v3H3z" fill="#c9c9c9" /><path d="M3 56h69v3H3z" fill="#333" /><rect x="33" y="26" width="28" height="28" rx="9" fill="#fff" stroke="#aaa" /><circle cx="47" cy="39" r="6" fill="#5a5d62" /><path d="M40 30h14M40 50h14" stroke="#e8425a" stroke-width="2" stroke-dasharray="2 1" /><path d="M16 24v26" stroke="#bbb" /><path d="M31 27v4M31 45v4" stroke="#2faa5a" stroke-width="2" /></svg></button>
        <button class="app" type="button" aria-label="Downloads"><svg viewBox="0 0 72 72"><path d="M16-6h26l12 9v14H16z" fill="#ededed" stroke="#bbb" /><path d="M4 2h66v30H4z" fill="#fff" stroke="#bcbcbc" /><path d="M1 11h54l19 20v37H1z" fill="#fdfdfd" stroke="#c9c9c9" /><path d="M55 11v20h19z" fill="#e6e6e6" stroke="#bbb" /><text x="37" y="61" class="pdf">PDF</text></svg></button>
        <button class="app" type="button" aria-label="Trash"><svg viewBox="0 0 72 72"><defs><linearGradient id="tr"><stop offset="0" stop-color="#c8c8c8" /><stop offset=".4" stop-color="#f0f0f0" /><stop offset="1" stop-color="#b4b4b4" /></linearGradient></defs><path d="M6 4 69 4 61 68q-1 7-24 7t-24-7z" fill="url(#tr)" /><path d="m12 4 8-9 8 5 10-6 8 6 10-2 8 8-4 6H16z" fill="#e9e9e9" stroke="#777" /><path d="m18 4 6-6M28 8l3-8M42 8l5-7M56 6l4-4" fill="none" stroke="#444" stroke-width="3" /><path d="m29-1 5 6" stroke="#3bbfa0" stroke-width="4" /><path d="m46 5 7 3" stroke="#d86a40" stroke-width="3" /><path d="M6 4q31 14 63 0" fill="none" stroke="#f3f3f3" stroke-width="2.500" /></svg></button>
      </div>
    </footer>
  </div>
</template>

<style>
body {
  margin: 0;
}
</style>

<style scoped>
.desktop {
  --ui: "Noto Sans CJK SC", "Open Sans", sans-serif;
  --sys: Inter, "Liberation Sans", sans-serif;
  position: relative;
  display: flex;
  flex-direction: column;
  min-height: 100vh;
  background: linear-gradient(90deg, #2f2f31 0%, #4b4a49 20%, #5e5b53 40%, #66635c 62%, #262627 76%, #2c2c2d 100%);
  font-family: var(--ui);
  color: #222;
  overflow: hidden;
}
.desktop *,
.desktop *::before {
  box-sizing: border-box;
}
svg {
  display: block;
  overflow: visible;
  flex: none;
}
.stone {
  position: absolute;
  right: 0;
  bottom: 0;
  width: 100%;
  height: 130px;
  opacity: 0.4;
}
button {
  font: inherit;
  color: inherit;
  border: 0;
  margin: 0;
  padding: 0;
  background: none;
}
i {
  display: block;
  flex: none;
}

.menubar {
  position: relative;
  display: flex;
  justify-content: space-between;
  align-items: center;
  height: 49px;
  padding: 0 38px 2px 40px;
  background: linear-gradient(90deg, #5f5f62 0%, #504d4b 40%, #504c47 72%, #3b393a 90%, #38373a 100%);
  color: #fff;
  font: 25px/32px var(--sys);
  border-bottom: 1px solid #111;
}
.menus,
.status {
  display: flex;
  align-items: center;
}
.menus {
  gap: 43px;
}
.menu {
  text-shadow: 0 2px 4px rgba(0, 0, 0, 0.3);
}
.strong {
  font-weight: 700;
}
.status {
  gap: 39px;
}
.clock {
  display: flex;
  gap: 20px;
}

.window {
  position: relative;
  flex: 1;
  display: flex;
  flex-direction: column;
  background: #fff;
  border-radius: 20px;
  overflow: hidden;
}
.titlebar {
  display: flex;
  height: 71px;
  padding-top: 7px;
  background: #e6e6e6;
  border-top: 1px solid #f6f6f6;
}
.lights {
  display: flex;
  align-items: center;
  gap: 16px;
  width: 157px;
  padding: 0 0 4px 24px;
}
.lights i {
  width: 24px;
  height: 24px;
  border-radius: 50%;
}
.red {
  background: #ff5f57;
}
.amber {
  background: #febc2e;
}
.green {
  background: #28c840;
}
.home-tab {
  display: flex;
  align-items: center;
  justify-content: center;
  width: 66px;
  padding-bottom: 2px;
  background: #fafafa;
  border-left: 1px solid #aaa;
  border-radius: 10px 10px 0 0;
}
.doc-tab {
  display: flex;
  align-items: center;
  justify-content: space-between;
  width: 420px;
  margin-left: 7px;
  padding: 0 23px;
  background: #fff;
  border-radius: 12px 12px 0 0;
}
.doc-name {
  width: 296px;
  font-size: 26px;
  line-height: 32px;
  color: #000;
  white-space: nowrap;
}
.create {
  display: flex;
  align-items: center;
  gap: 20px;
  height: 47px;
  margin: 8px 0 0 9px;
  padding: 0 17px 2px 18px;
  border: 1px solid #b4b4b4;
  border-radius: 10px;
  font-size: 20px;
}
.account {
  display: flex;
  align-items: center;
  gap: 28px;
  margin-left: auto;
  margin-right: 30px;
  padding-right: 7px;
  border-right: 1px solid #9c9c9c;
}

.toolbar {
  display: flex;
  justify-content: space-between;
  align-items: center;
  height: 96px;
  padding: 0 34px 0 30px;
  border-bottom: 2px solid #d3d3d3;
  font-size: 24px;
  line-height: 32px;
}
.tool-tabs {
  display: flex;
  gap: 49px;
}
.actions {
  display: flex;
  align-items: center;
}
.find {
  display: flex;
  align-items: center;
  gap: 20px;
  margin-right: 38px;
}
.rule {
  width: 2px;
  height: 32px;
  background: #d5d5d5;
}
.trio {
  display: flex;
  align-items: center;
  gap: 47px;
  padding: 0 33px;
}
.share,
.ask {
  height: 64px;
  border-radius: 32px;
  color: #fff;
  font-weight: 700;
}
.share {
  width: 132px;
  margin: 0 18px 0 15px;
  background: #222;
}
.ask {
  display: flex;
  align-items: center;
  gap: 10px;
  padding: 0 34px 0 26px;
  background: linear-gradient(90deg, #ff6a58 8%, #a86db8 45%, #686cff 78%);
}

.body {
  flex: 1;
  display: flex;
}
.gutter-left {
  width: 354px;
  padding: 24px;
  background: #f7f7f7;
}
.palette {
  display: flex;
  flex-direction: column;
  align-items: center;
  gap: 16px;
  width: 80px;
  padding: 6px 0;
  background: #fff;
  border: 2px solid #b0b0b0;
  border-radius: 7px;
}
.handle {
  width: 64px;
  height: 8px;
  border-radius: 4px;
  background: #b0b0b0;
}
.tool {
  border-radius: 5px;
}
.tool.on {
  background: #0565dd;
}
.glyph-a {
  font: 700 24px "Liberation Sans", sans-serif;
  fill: #222;
}
.page {
  flex: 1;
  padding: 104px 148px;
  border-left: 2px solid #d3d3d3;
  border-right: 2px solid #d3d3d3;
  display: flex;
  flex-direction: column;
  justify-content: space-between;
}
.gutter-right {
  width: 229px;
  background: #f7f7f7;
}

.bar3d {
  display: grid;
  grid-template-columns: 86px 76px 68px 398px 70px 72px 72px 124px 100px 130px 116px 118px;
  align-self: flex-start;
  height: 80px;
  padding-left: 18px;
  background: #e2e2e2;
}
.cell {
  display: flex;
  align-items: center;
  justify-content: center;
}
.split {
  display: flex;
  width: 86px;
  height: 64px;
}
.face,
.drop {
  display: flex;
  align-items: center;
  justify-content: center;
  border: 2px solid #bdbdbd;
  background: linear-gradient(#c9c9c9, #ececec);
}
.face {
  width: 64px;
  border-radius: 8px 0 0 8px;
}
.drop {
  flex: 1;
  margin-left: -2px;
  border-radius: 0 8px 8px 0;
}
.solo {
  width: 66px;
  height: 64px;
  border-radius: 8px;
}
.sep {
  width: 4px;
  height: 48px;
  background: linear-gradient(#e8e8e8, #fff, #e8e8e8);
}
.tri {
  width: 14px;
  height: 9px;
  background: #777;
  clip-path: polygon(0 0, 100% 0, 50% 100%);
}
.dark {
  background: #666;
}
.views {
  position: relative;
  width: 322px;
  height: 33px;
  margin-bottom: 4px;
}
.views select {
  display: block;
  width: 100%;
  height: 100%;
  padding: 0 12px;
  appearance: none;
  border: 0;
  border-radius: 7px;
  background: #fff;
  box-shadow: 0 1px 2px rgba(0, 0, 0, 0.3);
  font: 19px/32px var(--ui);
  color: #222;
}
.views svg {
  position: absolute;
  right: 10px;
  top: 8px;
}
.pair {
  display: flex;
  align-items: center;
  gap: 12px;
}
.swatch {
  display: flex;
  align-items: center;
  gap: 30px;
  height: 48px;
}
.chip {
  align-self: flex-start;
  width: 32px;
  height: 32px;
  background: #fff;
  border: 2px solid #888;
}
.axes {
  margin: 0 0 94px 48px;
}

.panel {
  position: relative;
  display: grid;
  grid-template-rows: 721fr 598fr 503fr;
  width: 802px;
  padding: 0 5px 0 19px;
  border-left: 2px solid #d3d3d3;
  border-right: 2px solid #d3d3d3;
  font-size: 19px;
  line-height: 24px;
  color: #000;
}
.pane {
  min-height: 0;
}
.resizer {
  position: absolute;
  left: 9px;
  top: calc(50% - 44px);
  width: 8px;
  height: 88px;
  border-radius: 4px;
  background: #b0b0b0;
}
.panel-head {
  display: flex;
  align-items: center;
  padding: 34px 47px 0 45px;
}
.panel-head h2 {
  flex: 1;
  margin: 0 0 0 46px;
  padding-bottom: 4px;
  font-size: 30px;
  line-height: 36px;
  font-weight: 700;
}
.rec {
  width: 36px;
  height: 36px;
  margin-right: 34px;
  border-radius: 50%;
  background: #f00;
}
.splitter {
  position: relative;
  display: flex;
  justify-content: center;
  margin-top: -12px;
}
.splitter::before {
  content: "";
  position: absolute;
  left: 0;
  right: 0;
  top: 11px;
  height: 2px;
  background: #ccc;
}
.grip {
  position: relative;
  display: flex;
  justify-content: center;
  align-items: center;
  gap: 3px;
  width: 92px;
  height: 24px;
  border: 2px solid #ccc;
  border-radius: 12px;
  background: #fbfbfb;
}
.grip i {
  width: 3px;
  height: 10px;
  background: linear-gradient(#c4c4c4 4px, transparent 4px 6px, #c4c4c4 6px);
}
.view-bar {
  display: flex;
  height: 64px;
  margin-top: 3px;
  background: #e6e6e6;
}
.slot {
  display: flex;
  align-items: center;
  justify-content: center;
  width: 99px;
}
.options {
  display: flex;
  align-items: center;
  gap: 10px;
  margin: 0 20px 0 auto;
}
.view-row {
  display: flex;
  gap: 14px;
  padding: 12px 48px;
}
.view-row svg {
  margin-top: 5px;
}
.info {
  margin: 6px 0;
}

.rail {
  display: flex;
  flex-direction: column;
  justify-content: space-between;
  width: 94px;
  padding: 18px 2px 2px 0;
}
.rail-top,
.rail-bottom {
  display: flex;
  flex-direction: column;
  align-items: center;
}
.rail-top {
  gap: 14px;
}
.rail-bottom {
  gap: 8px;
}
.rb {
  display: flex;
  align-items: center;
  justify-content: center;
  width: 64px;
  height: 64px;
  border-radius: 8px;
}
.rb.on {
  background: #444;
}
.rail-rule {
  width: 48px;
  height: 2px;
  margin: -3px 0;
  background: #e1e1e1;
}
.wide {
  width: 68px;
}
.pagebox {
  width: 64px;
  height: 64px;
  padding: 0 0 8px;
  border: 2px solid #b0b0b0;
  border-radius: 7px;
  text-align: center;
  font: 24px/32px var(--ui);
  color: #222;
}
.total {
  font-size: 24px;
  line-height: 56px;
  color: #222;
}

.dock-area {
  position: relative;
  display: flex;
  justify-content: center;
  padding: 2px 0 10px;
}
.dock {
  display: flex;
  gap: 20px;
  height: 110px;
  padding: 14px 15px;
  border: 2px solid rgba(255, 255, 255, 0.2);
  border-radius: 30px;
  background: linear-gradient(90deg, #878687 0%, #8a8888 18%, #7e7a74 24%, #939088 36%, #949189 60%, #8c8985 70%, #6f6e6d 76%, #767575 100%);
  background-clip: padding-box;
  box-shadow: 0 0 100px rgba(0, 0, 0, 0.25);
}
.app {
  position: relative;
  width: 72px;
  height: 72px;
}
.app svg {
  height: 72px;
}
.run::before {
  content: "";
  position: absolute;
  left: 32px;
  top: 82px;
  width: 8px;
  height: 8px;
  border-radius: 50%;
  background: #0c0c0c;
}
.badge {
  position: absolute;
  right: -12px;
  top: -8px;
  width: 34px;
  height: 34px;
  border-radius: 50%;
  background: #f9413a;
  color: #fff;
  font: 400 20px/34px var(--sys);
}
.cal {
  border-radius: 17px;
  background: linear-gradient(#f0564e 23px, #fafaf8 23px);
  font-family: var(--sys);
}
.cal span {
  display: block;
}
.month {
  color: #fff;
  font-size: 15px;
  line-height: 24px;
  font-weight: 600;
}
.day {
  color: #1c1c1c;
  font-size: 42px;
  line-height: 42px;
  font-weight: 300;
}
.adobe {
  border-radius: 17px;
  font-size: 40px;
  line-height: 64px;
  font-weight: 700;
}
.ai {
  background: #300;
  color: #ff9a00;
}
.ps {
  background: #001e36;
  color: #31a8ff;
}
.id {
  background: #49021f;
  color: #ff3366;
}
.dw {
  background: #470137;
  color: #ff61f6;
}
.office {
  font: 700 19px var(--sys);
  fill: #fff;
  text-anchor: middle;
}
.pdf {
  font: 11px var(--sys);
  fill: #777;
  text-anchor: middle;
}
.rainbow {
  width: 72px;
  height: 72px;
  border-radius: 17px;
  background: conic-gradient(from 20deg, #f22020, #ff8a00 60deg, #f7d21a 90deg, #5cc64c 140deg, #28a5e0 190deg, #4a6cf0 225deg, #a53cf0 270deg, #ff1fa0 310deg, #f22020);
}
.bar {
  width: 2px;
  height: 82px;
  margin: -3px 10px 0 10px;
  background: #484747;
}
</style>
